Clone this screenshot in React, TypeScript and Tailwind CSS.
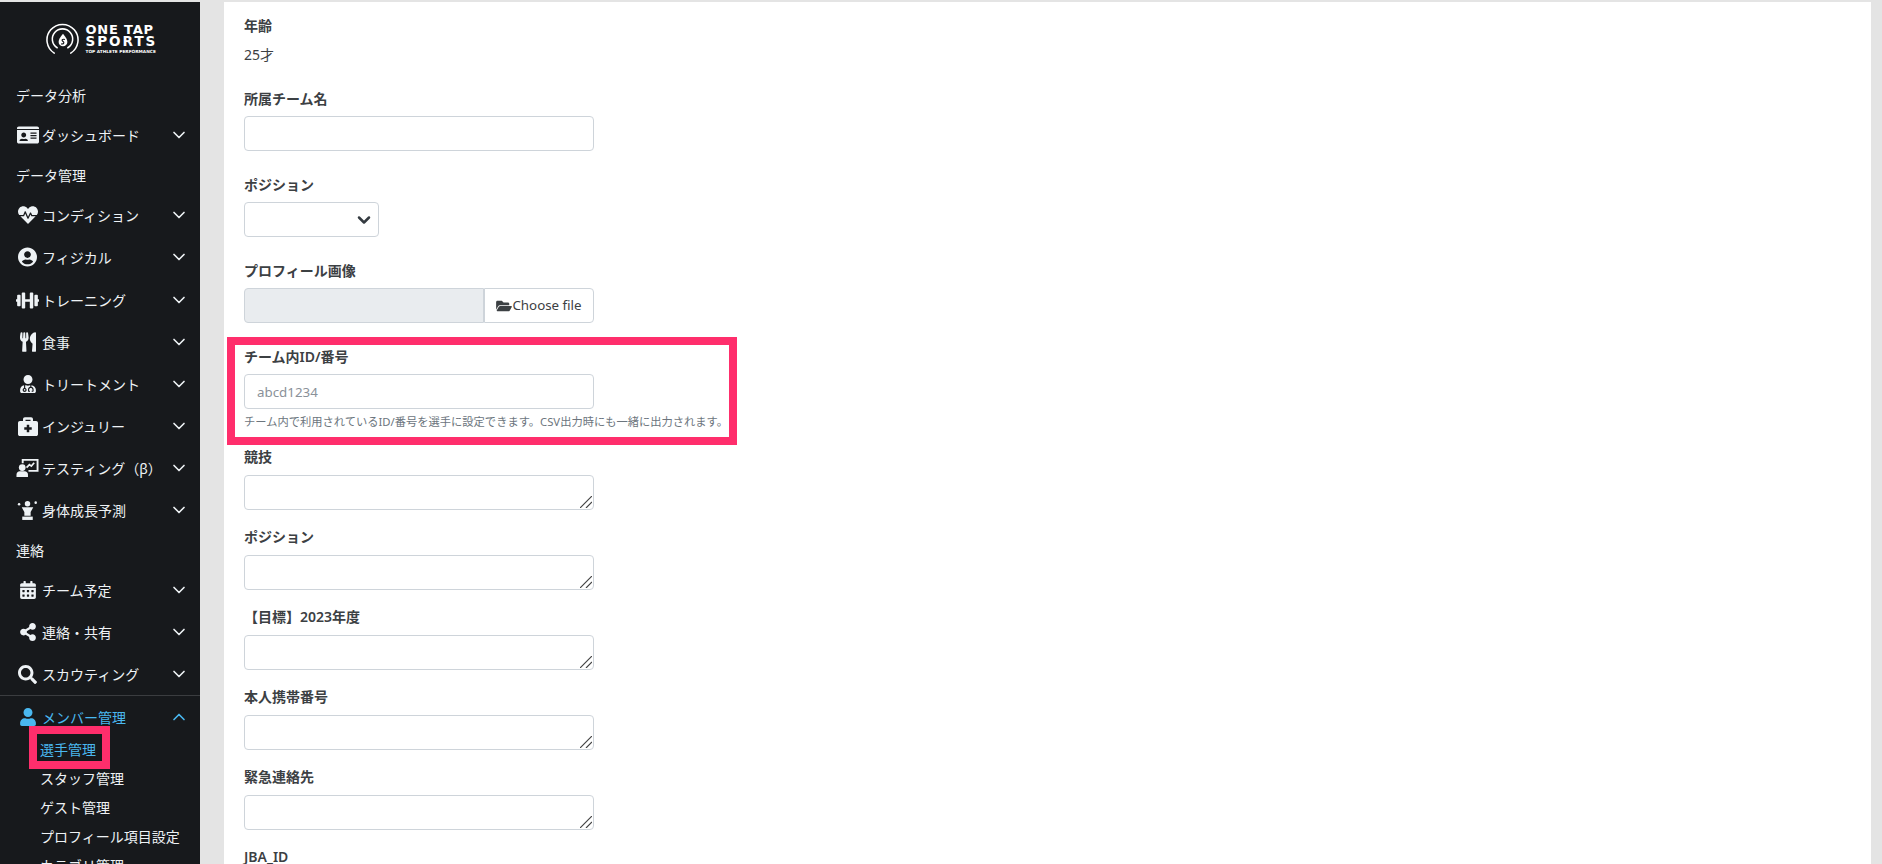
import type { ReactNode } from "react";
import {
  FaIdCard,
  FaHeartbeat,
  FaUserCircle,
  FaDumbbell,
  FaUtensils,
  FaUserMd,
  FaBriefcaseMedical,
  FaCalendarAlt,
  FaShareAlt,
  FaSearch,
  FaUser,
  FaFolderOpen,
} from "react-icons/fa";
import { ChevronDown, ChevronUp } from "lucide-react";

// person + board with a trend line, not in the icon packages
function TestingIcon() {
  return (
    <svg viewBox="0 0 24 20" className="h-[20px] w-[24px]" fill="currentColor">
      <path d="M6 .5h17.500v13.500H13v-2h8.500V2.500H8V5H6Z" />
      <path d="M11 9.500l3-3 2 1.500 3-3.500" fill="none" stroke="currentColor" strokeWidth="1.800" />
      <circle cx="6.500" cy="9.500" r="3.500" />
      <path d="M.5 19.500v-2.500c0-2 1.500-3.500 3.500-3.500h5c2 0 3.500 1.500 3.500 3.500v2.500Z" />
    </svg>
  );
}

function GrowthIcon() {
  return (
    <svg viewBox="0 0 20 20" className="h-[21px] w-[21px]" fill="currentColor">
      <circle cx="10" cy="3.500" r="2.600" />
      <path d="M4.500 7h11l-2.500 4.500V15H7v-3.500Z" />
      <path d="M5 15.800h10V19H5Z" />
      <circle cx="2" cy="4" r="1.200" />
      <circle cx="17.800" cy="2.500" r="1.200" />
    </svg>
  );
}

function Logo() {
  return (
    <div className="flex items-start gap-[7px]">
      <svg viewBox="0 0 34 34" className="h-[33px] w-[33px]" fill="none" stroke="#fff">
        <path d="M8.500 31A16 16 0 1 1 25.500 31" strokeWidth="1.600" strokeLinecap="round" />
        <path d="M11.500 25.500A10.500 10.500 0 1 1 22.500 25.500" strokeWidth="1.600" strokeLinecap="round" />
        <path d="M17.500 11c-3 3.500-4.500 6-4.500 8.500a4.500 4.500 0 0 0 9 0C22 17 20.500 14.500 17.500 11Z" fill="#fff" stroke="none" />
        <path d="M19.500 17c-2.500-.8-4 .5-2 2 1.800 1.300.5 3-2 2.500" stroke="#17191c" strokeWidth="1.200" />
      </svg>
      <div className="mt-[1px] flex w-[71px] flex-col font-['DejaVu_Sans',sans-serif] font-bold text-white">
        <span className="h-[11px] text-[13px] leading-[11px] tracking-[0.8px] whitespace-nowrap">ONE TAP</span>
        <span className="h-[13px] text-[13.500px] leading-[13px] tracking-[2px] whitespace-nowrap">SPORTS</span>
        <span className="mt-[1px] text-[4.300px] leading-[5px] whitespace-nowrap">TOP ATHLETE PERFORMANCE</span>
      </div>
    </div>
  );
}

type NavItem = { label: string; icon: ReactNode };

function Heading({ children }: { children: ReactNode }) {
  return <div className="flex h-[38px] items-center pl-4 text-[14px]">{children}</div>;
}

function Item({ label, icon }: NavItem) {
  return (
    <div className="flex h-[42px] items-center pl-4 pr-[11px] text-[14px]">
      <span className="mr-[3px] flex w-[23px] shrink-0 items-center justify-center">{icon}</span>
      <span className="flex-1 whitespace-nowrap">{label}</span>
      <ChevronDown className="h-[20px] w-[20px]" strokeWidth={2} />
    </div>
  );
}

function Sidebar() {
  return (
    <aside className="h-[862px] w-[200px] shrink-0 overflow-hidden bg-[#17191c] text-[#eef2f5]">
      <div className="flex h-[74px] justify-center pt-[21px] pl-[2px]">
        <Logo />
      </div>
      <Heading>データ分析</Heading>
      <Item label="ダッシュボード" icon={<FaIdCard className="h-[20px] w-[22px]" />} />
      <Heading>データ管理</Heading>
      <Item label="コンディション" icon={<FaHeartbeat className="h-[20px] w-[20px]" />} />
      <Item label="フィジカル" icon={<FaUserCircle className="h-[20px] w-[19px]" />} />
      <div className="h-[1px]" />
      <Item label="トレーニング" icon={<FaDumbbell className="h-[19px] w-[23px]" />} />
      <Item label="食事" icon={<FaUtensils className="h-[20px] w-[16px]" />} />
      <Item label="トリートメント" icon={<FaUserMd className="h-[18px] w-[16px]" />} />
      <Item label="インジュリー" icon={<FaBriefcaseMedical className="h-[20px] w-[20px]" />} />
      <Item label="テスティング（β）" icon={<TestingIcon />} />
      <Item label="身体成長予測" icon={<GrowthIcon />} />
      <Heading>連絡</Heading>
      <Item label="チーム予定" icon={<FaCalendarAlt className="h-[18px] w-[16px]" />} />
      <Item label="連絡・共有" icon={<FaShareAlt className="h-[18px] w-[16px]" />} />
      <Item label="スカウティング" icon={<FaSearch className="h-[19px] w-[19px]" />} />
      <div className="border-t border-[#3b3d40]">
        <div className="flex h-[42px] items-center pl-4 pr-[11px] text-[14px] text-[#4ab8f0]">
          <span className="mr-[3px] flex w-[23px] shrink-0 items-center justify-center">
            <FaUser className="h-[18px] w-[16px]" />
          </span>
          <span className="flex-1 whitespace-nowrap">メンバー管理</span>
          <ChevronUp className="h-[20px] w-[20px]" strokeWidth={2} />
        </div>
        <div className="-mt-[3px] pl-[40px] text-[14px] leading-[29px]">
          <div className="text-[#4ab8f0]">選手管理</div>
          <div>スタッフ管理</div>
          <div>ゲスト管理</div>
          <div>プロフィール項目設定</div>
          <div>カテゴリ管理</div>
        </div>
      </div>
    </aside>
  );
}

function Label({ children, gap = "mb-[7px]" }: { children: ReactNode; gap?: string }) {
  return <div className={gap + " h-[21px] text-[14px] leading-[21px] font-semibold text-[#3c4043]"}>{children}</div>;
}

function TextareaField({ label }: { label: string }) {
  return (
    <div className="mb-[16px]">
      <Label gap="mb-[8px]">{label}</Label>
      <div className="relative h-[35px] w-[350px]">
        <textarea className="block h-full w-full resize-none rounded-[4px] border border-[#ced4da] bg-white" />
        {/* resize grip */}
        <svg viewBox="0 0 12 12" className="absolute right-[2px] bottom-[2px] h-[12px] w-[12px]" stroke="#444" strokeWidth="1.200">
          <path d="M0 12 12 0M6 12l6-6" />
        </svg>
      </div>
    </div>
  );
}

function Form() {
  return (
    <main className="ml-[24px] h-[862px] w-[1647px] overflow-hidden bg-white pt-[13px] pl-[20px]">
      <div className="mb-[23px]">
        <Label gap="mb-[8px]">年齢</Label>
        <div className="text-[14px] leading-[21px] text-[#3c4043]">25才</div>
      </div>
      <div className="mb-[23px]">
        <Label>所属チーム名</Label>
        <input className="block h-[35px] w-[350px] rounded-[4px] border border-[#ced4da] bg-white" />
      </div>
      <div className="mb-[23px]">
        <Label>ポジション</Label>
        <div className="flex h-[35px] w-[135px] items-center justify-end rounded-[4px] border border-[#ced4da] pr-[4px] text-[#343a40]">
          <ChevronDown className="h-[20px] w-[20px]" strokeWidth={3} />
        </div>
      </div>
      <div className="mb-[23px]">
        <Label>プロフィール画像</Label>
        <div className="flex h-[35px] w-[350px]">
          <div className="w-[240px] rounded-l-[4px] border border-[#ced4da] bg-[#e9ecef]" />
          <div className="flex flex-1 items-center justify-center rounded-r-[4px] border border-[#ced4da] text-[13.333px] text-[#3c4043]">
            <FaFolderOpen className="h-[14px] w-[16px]" />
            Choose file
          </div>
        </div>
      </div>
      <div className="mb-[15px]">
        <Label>チーム内ID/番号</Label>
        <input
          placeholder="abcd1234"
          className="block h-[35px] w-[350px] rounded-[4px] border border-[#ced4da] bg-white px-3 text-[13.333px] placeholder:text-[#8a9199]"
        />
        <div className="mt-[4px] h-[18px] text-[11.280px] leading-[18px] whitespace-nowrap text-[#6c757d]">
          チーム内で利用されているID/番号を選手に設定できます。CSV出力時にも一緒に出力されます。
        </div>
      </div>
      <TextareaField label="競技" />
      <TextareaField label="ポジション" />
      <TextareaField label="【目標】2023年度" />
      <TextareaField label="本人携帯番号" />
      <TextareaField label="緊急連絡先" />
      <Label>JBA_ID</Label>
    </main>
  );
}

export default function App() {
  return (
    <div className="relative h-[864px] w-[1882px] overflow-hidden bg-[#e4e4e4] pt-[2px] font-['Noto_Sans','Noto_Sans_CJK_JP',sans-serif]">
      <div className="flex">
        <Sidebar />
        <Form />
      </div>
      <div className="absolute top-[337px] left-[227px] h-[108px] w-[510px] border-[8px] border-[#ff2e6c]" />
      <div className="absolute top-[726px] left-[29px] h-[43px] w-[81px] border-[8px] border-[#ff2e6c]" />
    </div>
  );
}
